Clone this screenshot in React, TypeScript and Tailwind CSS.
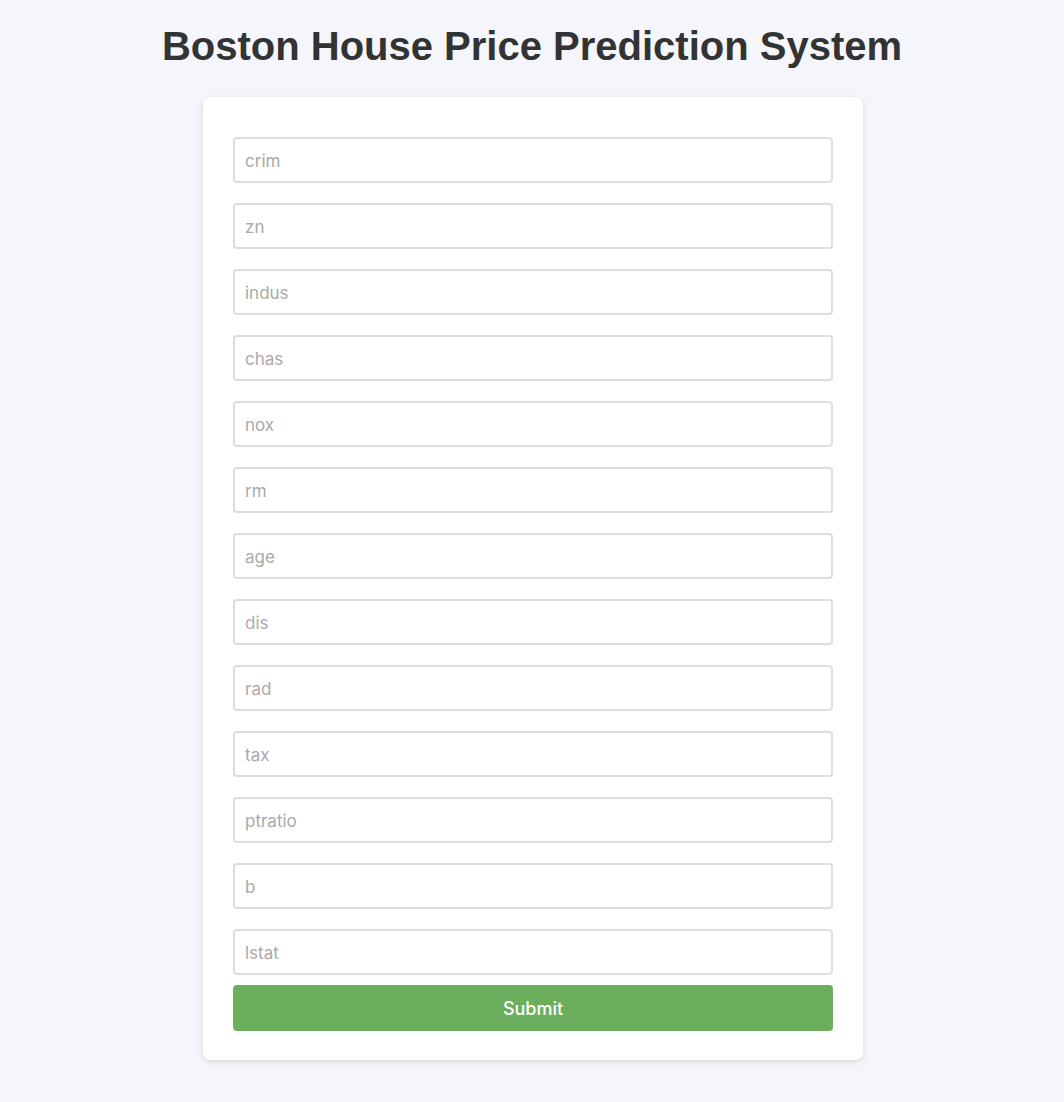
const fields = [
  "crim",
  "zn",
  "indus",
  "chas",
  "nox",
  "rm",
  "age",
  "dis",
  "rad",
  "tax",
  "ptratio",
  "b",
  "lstat",
];

export default function App() {
  return (
    <div className="min-h-[1102px] bg-[#f5f6fb] pt-[23px] font-['Liberation_Sans',Arial,sans-serif]">
      <h1 className="text-center text-[40px] font-bold leading-[46px] text-[#333]">
        Boston House Price Prediction System
      </h1>

      <form
        onSubmit={(e) => e.preventDefault()}
        className="mx-auto mt-[28px] w-[660px] translate-x-[1px] rounded-lg bg-white px-[30px] pt-[40px] pb-[29px] shadow-[0_2px_6px_rgba(0,0,0,0.12)]"
      >
        <div className="flex flex-col gap-[20px]">
          {fields.map((name) => (
            <input
              key={name}
              type="text"
              name={name}
              placeholder={name}
              className="h-[46px] w-full rounded-[4px] border-2 border-[#ddd] px-[10px] pt-[2px] font-['Inter',sans-serif] text-[17px] text-[#333] outline-none placeholder:text-[#a9a9a9]"
            />
          ))}
        </div>

        {/* Submit */}
        <button
          type="submit"
          className="mt-[10px] h-[46px] w-full rounded-[4px] bg-[#6aae5e] font-['Inter',sans-serif] text-[18px] font-medium text-white"
        >
          Submit
        </button>
      </form>
    </div>
  );
}
